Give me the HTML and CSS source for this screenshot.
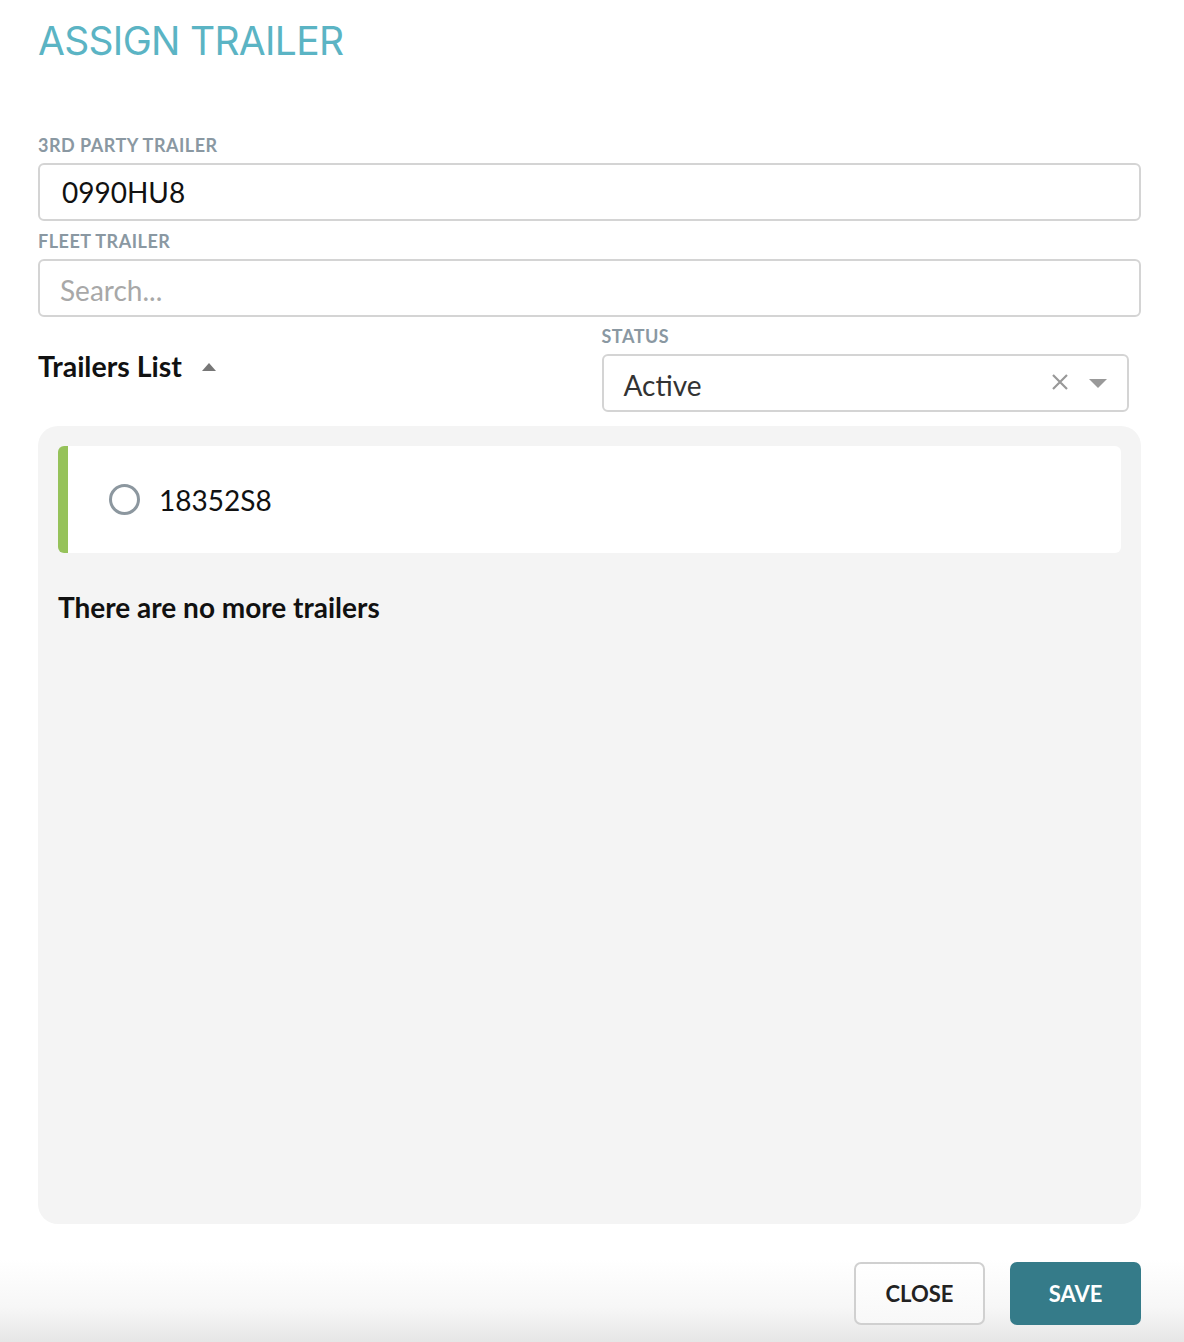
FILE: index.html
```html
<!DOCTYPE html>
<html lang="en">

<head>
    <meta charset="UTF-8">
    <meta name="viewport" content="width=device-width, initial-scale=1.0">
    <title>Assign Trailer</title>
    <link rel="stylesheet" href="styles.css">
</head>

<body>
    <div class="modal">
        <h1 class="modal-title">ASSIGN TRAILER</h1>

        <label class="field-label" for="third-party">3RD PARTY TRAILER</label>
        <input class="field-input" type="text" id="third-party" value="0990HU8">

        <label class="field-label" for="fleet-search">FLEET TRAILER</label>
        <input class="field-input" type="text" id="fleet-search" placeholder="Search...">

        <div class="list-head">
            <div class="list-title">
                Trailers List
                <svg class="sort-caret" width="14" height="8" viewBox="0 0 14 8">
                    <path d="M0 8 L7 0 L14 8 Z" fill="#777" />
                </svg>
            </div>
            <div class="status-col">
                <span class="field-label">STATUS</span>
                <div class="select-box">
                    <span class="select-value">Active</span>
                    <svg class="select-clear" width="18" height="18" viewBox="0 0 18 18">
                        <path d="M2 2 L16 16 M16 2 L2 16" stroke="#999" stroke-width="2.2" />
                    </svg>
                    <svg class="select-arrow" width="18" height="9" viewBox="0 0 18 9">
                        <path d="M0 0 L18 0 L9 9 Z" fill="#999" />
                    </svg>
                </div>
            </div>
        </div>

        <div class="trailer-panel">
            <div class="trailer-card">
                <span class="radio"></span>
                <span class="trailer-code">18352S8</span>
            </div>
            <p class="list-end">There are no more trailers</p>
        </div>
    </div>

    <div class="modal-footer">
        <button class="btn btn-close">CLOSE</button>
        <button class="btn btn-save">SAVE</button>
    </div>
</body>

</html>
```

FILE: styles.css
```css
* {
    margin: 0;
    padding: 0;
    box-sizing: border-box;
}

body {
    font-family: Lato, "Open Sans", sans-serif;
    background: #fff;
    color: #111;
}

.modal {
    display: flex;
    flex-direction: column;
    padding: 17px 43px 0 38px;
}

.modal-title {
    font-family: Inter, "Open Sans", sans-serif;
    font-weight: 400;
    font-size: 39px;
    letter-spacing: -0.7px;
    line-height: 48px;
    color: #5bb4c4;
    margin-bottom: 68px;
}

.field-label {
    display: block;
    font-size: 18px;
    font-weight: 700;
    letter-spacing: 0.5px;
    line-height: 24px;
    color: #8a98a2;
    margin-bottom: 6px;
}

.field-input {
    width: 100%;
    height: 58px;
    border: 2px solid #d4d4d4;
    border-radius: 6px;
    padding: 0 20px 0 22px;
    font-family: Lato, sans-serif;
    font-size: 28px;
    color: #111;
    outline: none;
    margin-bottom: 8px;
}

.field-input::placeholder {
    color: #a8a8a8;
}

#fleet-search {
    padding: 4px 20px 0 20px;
    margin-bottom: 7px;
}

.list-head {
    display: grid;
    grid-template-columns: 1fr 1fr;
}

.list-title {
    display: flex;
    align-items: center;
    gap: 20px;
    font-size: 28.5px;
    font-weight: 700;
    line-height: 34px;
    margin-top: 25px;
    align-self: start;
}

.sort-caret {
    margin-top: 2px;
}

.status-col {
    padding: 0 12px;
}

.select-box {
    display: flex;
    align-items: center;
    height: 58px;
    border: 2px solid #d4d4d4;
    border-radius: 6px;
    padding: 4px 20px 0 20px;
}

.select-value {
    flex: 1;
    font-size: 28px;
    color: #333;
}

.select-clear {
    margin-right: 20px;
    margin-top: -6px;
}

.select-arrow {
    margin-top: -3px;
}

.trailer-panel {
    margin-top: 14px;
    height: 798px;
    background: #f4f4f4;
    border-radius: 20px;
    padding: 20px;
}

.trailer-card {
    display: flex;
    align-items: center;
    height: 107px;
    background: #fff;
    border-left: 10px solid #96c25a;
    border-radius: 6px;
    padding-left: 41px;
}

.radio {
    width: 31px;
    height: 31px;
    border: 3.5px solid #8c979f;
    border-radius: 50%;
    margin-right: 19px;
}

.trailer-code {
    font-size: 28px;
    color: #111;
}

.list-end {
    font-size: 28px;
    font-weight: 700;
    line-height: 34px;
    margin-top: 37px;
}

.modal-footer {
    display: flex;
    justify-content: flex-end;
    gap: 25px;
    padding: 38px 43px 17px 38px;
    background: linear-gradient(to bottom, #fff 0%, #fff 30%, #f7f7f7 70%, #e6e6e6 100%);
}

.btn {
    width: 131px;
    height: 63px;
    border-radius: 7px;
    font-family: Lato, sans-serif;
    font-size: 22px;
    font-weight: 700;
    cursor: pointer;
}

.btn-close {
    background: linear-gradient(#fff, #f8f8f8);
    border: 2px solid #d0d0d0;
    color: #222;
}

.btn-save {
    background: #357b89;
    border: none;
    color: #fff;
}
```
